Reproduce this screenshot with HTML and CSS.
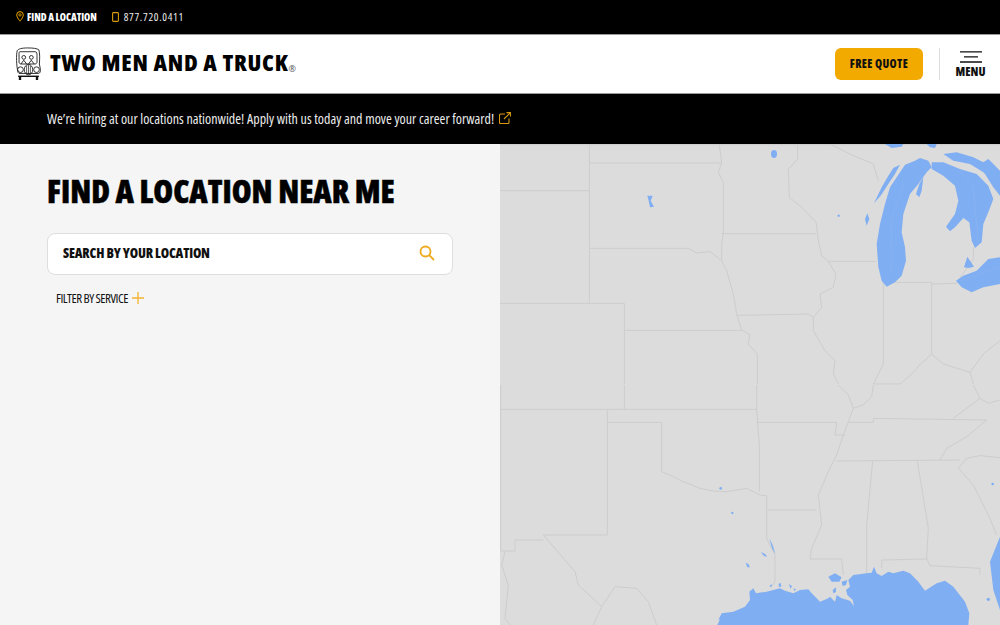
FILE: index.html
```html
<!DOCTYPE html>
<html lang="en">
<head>
<meta charset="utf-8">
<title>Find a Location - Two Men and a Truck</title>
<link rel="stylesheet" href="styles.css">
</head>
<body>
<div class="page">
  <div class="topbar">
    <a class="top-link find">
      <svg class="ico" width="8" height="11" viewBox="0 0 8 11"><path d="M4 .6a3.3 3.3 0 0 0-3.3 3.3C.7 6.200 4 10.200 4 10.200s3.300-4 3.300-6.300A3.300 3.300 0 0 0 4 .6z" fill="none" stroke="#f2a900" stroke-width="1"/><circle cx="4" cy="3.900" r="1.200" fill="none" stroke="#f2a900" stroke-width=".8"/></svg>
      <span>FIND A LOCATION</span>
    </a>
    <a class="top-link phone">
      <svg class="ico" width="7" height="10" viewBox="0 0 7 10"><rect x=".6" y=".6" width="5.800" height="8.800" rx=".8" fill="none" stroke="#d99a10" stroke-width="1.100"/></svg>
      <span>877.720.0411</span>
    </a>
  </div>
  <header class="header">
    <div class="brand">
      <svg class="truck" width="27" height="34" viewBox="0 0 28 36" fill="none" stroke="#111" stroke-width=".9">
        <path d="M3 27C1 20 1 8 2 4c1-2 5-3 11-3s10 .500 12 2c1 4 1 9 .500 15l1 5c.500 3-.500 5-2 5H4z" fill="#fff"/>
        <path d="M5 5h16c2 0 2 2 2 4v7c0 1-1 2-2 2H6c-1 0-2-1-2-2V7c0-1 0-2 1-2z"/>
        <circle cx="9" cy="11" r="2"/><circle cx="17" cy="11" r="2"/>
        <path d="M6 18l3-4 3 4M14 18l3-4 3 4"/>
        <circle cx="5.500" cy="24" r="3"/><circle cx="22.500" cy="24" r="3"/>
        <ellipse cx="14" cy="24" rx="4.500" ry="5.500"/>
        <path d="M12 20v8M14 19v10M16 20v8" stroke-width=".7"/>
        <path d="M3 31h22" stroke-width="1.500"/>
        <path d="M5 31v4M23 31v4" stroke-width="2.500"/>
      </svg>
      <span class="brand-name">TWO MEN AND A TRUCK</span><span class="reg">®</span>
    </div>
    <div class="actions">
      <a class="quote">FREE QUOTE</a>
      <span class="divider"></span>
      <button class="menu">
        <svg width="24" height="12" viewBox="0 0 24 12" stroke="#111" stroke-width="1.300"><path d="M1 .8h22M5 5.800h14M1 11h22"/></svg>
        <span>MENU</span>
      </button>
    </div>
  </header>
  <div class="notice">
    <span>We’re hiring at our locations nationwide! Apply with us today and move your career forward!</span>
    <svg width="12" height="12" viewBox="0 0 12 12" fill="none" stroke="#d99a10" stroke-width="1.100"><path d="M6 2H1.500a1 1 0 0 0-1 1v7.500a1 1 0 0 0 1 1H9a1 1 0 0 0 1-1V6.500M7.500 .6h3.900v3.900M11.200 .8L5 7"/></svg>
  </div>
  <main class="main">
    <section class="panel">
      <h1>FIND A LOCATION NEAR ME</h1>
      <div class="search">
        <span>SEARCH BY YOUR LOCATION</span>
        <svg width="16" height="16" viewBox="0 0 16 16" fill="none" stroke="#eeaa1c" stroke-width="1.800"><circle cx="6.500" cy="6.500" r="5"/><path d="M10.200 10.200l4.800 4.800"/></svg>
      </div>
      <div class="filter">
        <span>FILTER BY SERVICE</span>
        <svg width="12" height="12" viewBox="0 0 12 12" stroke="#f2b431" stroke-width="1.300"><path d="M6 0v12M0 6h12"/></svg>
      </div>
    </section>
    <div class="map">
      <svg class="map-svg" viewBox="0 0 1500 1443" width="500" height="481" preserveAspectRatio="none">
        <g class="lines">
          <path d="M0 2H1500"/>
          <path d="M268 0V478M268 57H665M0 140H268M268 313H565L590 327 630 323 665 350"/>
          <path d="M658 0L665 57 655 85 670 115V268L665 300 665 350 680 380 700 450 710 510 725 558 750 572 745 600 772 630V720"/>
          <path d="M665 269H948M893 0V45L865 75 868 160 905 190 948 235 955 290 965 335 985 352 1008 390 1000 430 960 450 965 490 940 520 940 560 975 620 1005 650 1000 690 1015 720"/>
          <path d="M712 514L925 510 940 520M985 352H1130M990 0L1050 30 1120 60 1135 110"/>
          <path d="M1150 415V660L1120 720M1150 415H1295V630M1295 420L1370 418M1120 720H1200L1235 690 1262 660 1295 630 1330 660 1410 685 1450 630 1500 590M1410 685L1420 720M1420 310V345L1385 395 1370 418"/>
          <path d="M0 478H373V720M373 559H725"/>
        </g>
        <g transform="translate(0 723)">
          <g class="lines">
            <path d="M373 0V73M0 73H770M770 0V75L778 180V320"/>
            <path d="M2 0V498H45V465H130M130 450H322V73M322 112H485V260L520 275 550 290 600 310 640 318 680 320 740 310 780 330 800 332V460L825 510V590L815 605"/>
            <path d="M130 450L225 560 235 600 305 665 345 605 410 610 445 650 470 720M305 665L280 720M15 500L5 540 25 600 15 700 30 720"/>
            <path d="M770 112H1010L1005 150H1035M1015 0L1045 30 1060 70 1045 110 1030 150 1010 210 985 260 955 330 965 420 935 490 930 522H1025L1030 570"/>
            <path d="M803 375H950M1010 228L1380 225M1045 112H1120V100L1460 105 1400 155 1340 190 1320 225M1060 70L1090 60 1115 35 1120 0"/>
            <path d="M1118 228L1100 420V565M1252 228L1285 430 1280 520 1290 542 1440 550V570M1145 550V525L1280 522"/>
            <path d="M1375 250L1420 300 1465 390 1490 450M1375 250L1400 220 1440 212 1500 218M1360 100L1440 40 1420 0M1440 40L1465 55 1500 45"/>
          </g>
          <g class="water">
            <circle cx="1478" cy="297" r="4"/><circle cx="697" cy="384" r="3.500"/><circle cx="662" cy="310" r="4"/>
          </g>
        </g>
        <g class="water" transform="translate(630 1158)">
          <path d="M22 285L30 268 25 270 35 250 70 245 105 230 120 210 118 185 130 175 138 190 170 185 210 175 225 182 250 190 270 180 295 178 305 190 320 205 330 215 355 205 360 200 375 215 380 195 395 205 420 212 432 228 428 210 412 195 408 180 420 170 415 150 430 135 470 130 485 128 492 110 500 130 515 138 535 125 550 130 580 122 600 130 625 155 645 182 680 160 705 152 730 170 765 215 778 250 775 285Z"/>
          <path d="M355 140L375 130 395 142 388 155 365 155ZM395 155L412 150 408 165 398 168ZM368 180L378 172 378 186 370 190ZM870 20L840 95 850 180 870 240ZM107 98L115 102 120 112 112 112ZM152 66L165 72 172 80 162 78ZM178 25L188 45 196 72 186 55ZM178 168L186 162 184 172ZM206 162L212 158 214 170 206 170ZM236 162L246 168 242 176ZM250 175L258 178 254 184Z"/>
          <circle cx="835" cy="208" r="5"/>
        </g>
        <g transform="translate(1080 0)">
          <g class="water">
            <path d="M80 428L105 415 125 395 138 350 135 310 125 265 130 210 150 150 175 120 200 85 215 70 205 50 180 42 165 50 135 62 110 100 90 130 75 180 60 240 50 300 55 370 65 410Z"/>
            <path d="M42 178L65 130 85 95 100 72 120 62 105 90 85 120 62 155Z"/>
            <path d="M168 150L178 120 190 100 185 140 178 160Z"/>
            <path d="M215 55L250 55 300 75 350 90 385 125 400 165 385 205 370 240 365 295 345 312 335 290 328 235 310 222 285 250 270 262 258 248 285 210 295 170 285 125 250 95 215 75Z"/>
            <path d="M250 30L290 25 340 40 370 55 385 45 420 80V155L400 130 375 90 370 85 330 60 280 50ZM312 370L322 338 342 368 325 372ZM288 410L310 395 350 380 385 345 420 340V420L370 430 335 445 305 430ZM75 0H130L125 8 95 12ZM200 0H230L225 12 210 10ZM15 225L22 208 28 225 20 245Z"/>
          </g>
          <path class="lake-line" d="M135 110L95 220 93 400M300 80L340 130 355 300M300 410L420 370"/>
        </g>
        <g class="water">
          <ellipse cx="822" cy="30" rx="9" ry="12"/>
          <path d="M442 155L458 155 452 170 462 188 450 190 446 170Z"/><circle cx="1016" cy="215" r="3.500"/>
        </g>
      </svg>
    </div>
  </main>
</div>
</body>
</html>
```

FILE: styles.css
```css
* { box-sizing: border-box; }
html, body { margin: 0; padding: 0; }
body { font-family: "Open Sans", "Liberation Sans", sans-serif; color: #000; background: #fff; }
.page { width: 1000px; height: 625px; overflow: hidden; display: flex; flex-direction: column; }

.topbar { height: 35px; flex: none; background: #000; color: #fff; display: flex; align-items: center; padding: 0 0 1px 16px; gap: 15px; border-bottom: 1px solid #9a9a9a; }
.top-link { display: flex; align-items: center; gap: 3px; font-size: 11px; white-space: nowrap; }
.ico { flex: none; }
.find span { font-weight: 800; font-stretch: 75%; font-size: 10px; letter-spacing: -.05px; }
.phone { gap: 5px; }
.phone span { color: #ececec; font-size: 11px; font-weight: 400; font-stretch: 75%; letter-spacing: .7px; }

.header { height: 58px; flex: none; background: #fff; display: flex; align-items: center; justify-content: space-between; padding: 0 15px 1px 15px; }
.brand { display: flex; align-items: center; }
.truck { flex: none; margin-right: 8px; }
.brand-name { font-weight: 800; font-stretch: 75%; font-size: 23.500px; letter-spacing: .75px; color: #000; white-space: nowrap; padding-bottom: 3px; }
.reg { font-size: 9px; color: #555; margin-top: 10px; margin-left: 0; }
.actions { display: flex; align-items: center; }
.quote { width: 88px; height: 32px; background: #f2a900; border-radius: 6px; display: flex; align-items: center; justify-content: center; font-weight: 800; font-stretch: 75%; font-size: 11.500px; letter-spacing: .35px; color: #111; white-space: nowrap; }
.divider { width: 1px; height: 32px; background: #dcdcdc; margin: 0 16px 0 16px; }
.menu { border: 0; background: none; padding: 0; width: 29px; display: flex; flex-direction: column; align-items: center; gap: 3px; font-family: inherit; font-weight: 800; font-stretch: 75%; font-size: 12px; letter-spacing: 0; color: #111; line-height: 11px; }

.notice { height: 51px; flex: none; background: #000; color: #ececec; display: flex; align-items: center; gap: 5px; padding: 0 0 2px 47px; font-size: 14px; font-weight: 400; font-stretch: 75%; letter-spacing: .03px; border-top: 1px solid #9a9a9a; white-space: nowrap; }

.main { flex: 1; min-height: 0; display: flex; }
.panel { width: 500px; flex: none; background: #f5f5f5; padding: 29px 47px 0; }
h1 { margin: 0 0 24px; font-weight: 800; font-stretch: 75%; font-size: 32px; line-height: 36px; letter-spacing: 0; color: #000; white-space: nowrap; -webkit-text-stroke: .5px #000; }
.search { width: 406px; height: 42px; background: #fff; border: 1px solid #dedede; border-radius: 8px; display: flex; align-items: center; justify-content: space-between; padding: 0 17px 2px 15px; font-weight: 800; font-stretch: 75%; font-size: 13.500px; letter-spacing: -.18px; color: #111; }
.filter { margin: 14px 0 0 9px; display: flex; align-items: center; gap: 4px; font-weight: 500; font-stretch: 75%; font-size: 13px; letter-spacing: -.5px; color: #111; }
.map { width: 500px; flex: none; background: #dcdcdc; }
.map-svg { display: block; }
.lines path { fill: none; stroke: #cdcdcd; stroke-width: 3; }
.water { fill: #80aef2; stroke: none; }
.lake-line { fill: none; stroke: #8fb5ee; stroke-width: 1.500; }
```
